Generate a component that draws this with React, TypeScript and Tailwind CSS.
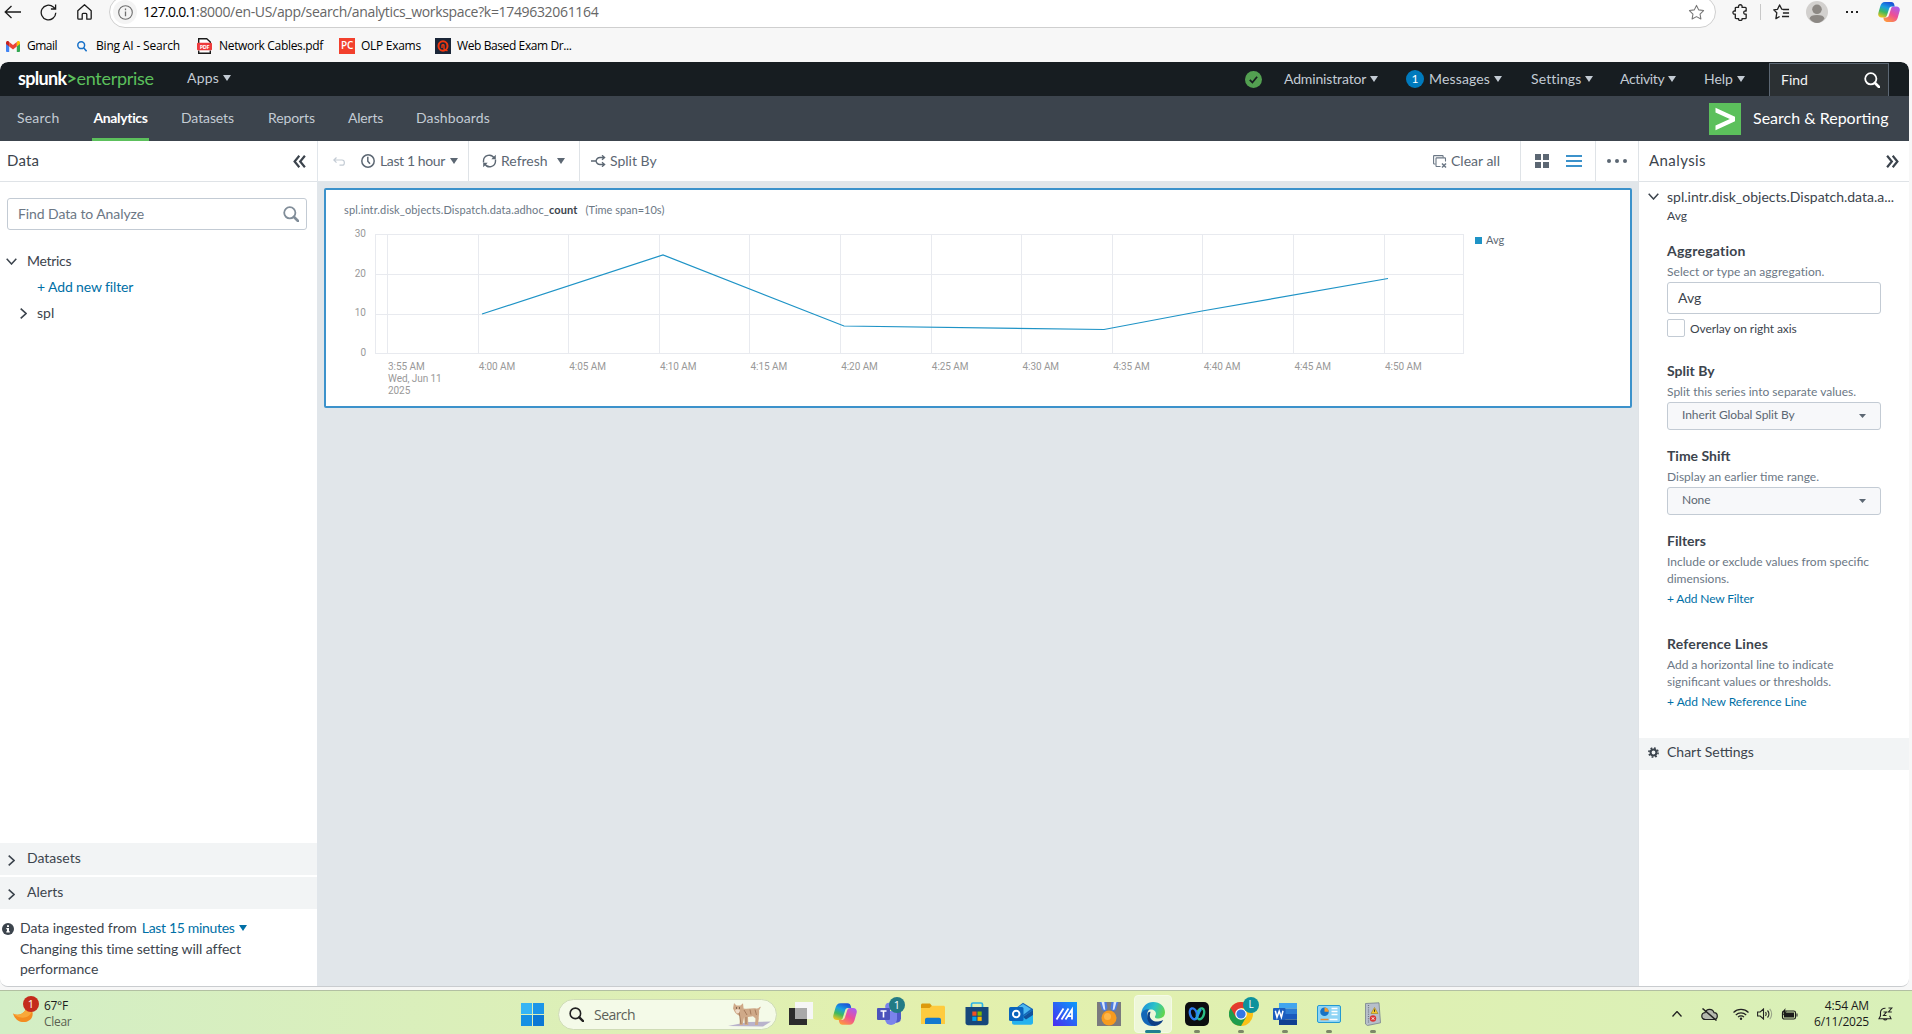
import type { ReactNode } from "react";

/* ---------- small shared pieces ---------- */

function Caret({ className = "" }: { className?: string }) {
  return (
    <svg viewBox="0 0 8 6" className={`h-1.5 w-2 shrink-0 ${className}`} fill="currentColor">
      <path d="M0 0h8L4 6z" />
    </svg>
  );
}

function Chevron({ dir, className = "" }: { dir: "down" | "right"; className?: string }) {
  return dir === "down" ? (
    <svg viewBox="0 0 11 7" className={`h-[7px] w-[11px] shrink-0 ${className}`} fill="none" stroke="#3c444d" strokeWidth="1.5">
      <path d="M.7.7 5.5 6 10.3.7" />
    </svg>
  ) : (
    <svg viewBox="0 0 7 11" className={`h-[11px] w-[7px] shrink-0 ${className}`} fill="none" stroke="#3c444d" strokeWidth="1.6">
      <path d="M.7.7 6 5.5.7 10.3" />
    </svg>
  );
}

function DoubleChevron({ flip = false }: { flip?: boolean }) {
  return (
    <svg viewBox="0 0 13 13" className={`h-[13px] w-[13px] shrink-0 ${flip ? "-scale-x-100" : ""}`} fill="none" stroke="#3c444d" strokeWidth="2.200">
      <path d="M6.3.8 1.6 6.5l4.7 5.7M11.9.8 7.2 6.5l4.7 5.7" />
    </svg>
  );
}

function Magnifier({ className = "", stroke = 2 }: { className?: string; stroke?: number }) {
  return (
    <svg viewBox="0 0 16 16" className={`shrink-0 ${className}`} fill="none" stroke="currentColor">
      <circle cx="6.8" cy="6.8" r="5.6" strokeWidth={stroke} />
      <path d="m11 11 4 4" strokeWidth={stroke + 0.8} strokeLinecap="round" />
    </svg>
  );
}

function CopilotLogo({ className = "" }: { className?: string }) {
  return (
    <svg viewBox="0 0 24 24" className={`shrink-0 ${className}`}>
      <defs>
        <linearGradient id="cpA" x1="0.6" y1="0" x2="0.2" y2="1">
          <stop offset="0" stopColor="#1b55d8" />
          <stop offset=".35" stopColor="#18a0e0" />
          <stop offset=".65" stopColor="#3fb95d" />
          <stop offset="1" stopColor="#f4c51d" />
        </linearGradient>
        <linearGradient id="cpB" x1="0.8" y1="0" x2="0.2" y2="1">
          <stop offset="0" stopColor="#a95cf0" />
          <stop offset=".5" stopColor="#ee4f95" />
          <stop offset="1" stopColor="#ff9a3d" />
        </linearGradient>
      </defs>
      <path fill="url(#cpB)" d="M17 6h3c3.200 0 4.300 2.500 3.600 5l-2 7c-.8 2.800-2.400 4.800-5.200 4.800H9.500c-2 0-2.800-1.200-3.300-2.800L5.800 18H9c1.500 0 2.400-.8 2.900-2.400l2.400-7.500C14.800 6.700 15.600 6 17 6z" />
      <path fill="url(#cpA)" d="M7 18H4C.8 18-.3 15.500.4 13l2-7C3.200 3.200 4.800 1.200 7.600 1.200h6.900c2 0 2.800 1.200 3.300 2.800l.4 2H15c-1.500 0-2.400.8-2.900 2.400l-2.400 7.500C9.200 17.300 8.400 18 7 18z" />
    </svg>
  );
}

/* ---------- browser chrome ---------- */

function Bookmark({ icon, label, className }: { icon: ReactNode; label: string; className: string }) {
  return (
    <div className={`flex shrink-0 items-center whitespace-nowrap ${className}`}>
      {icon}
      <span>{label}</span>
    </div>
  );
}

function BrowserChrome() {
  return (
    <header className="h-[62px] shrink-0 bg-[#f7f7f7] font-['Open_Sans',sans-serif] text-[#1b1b1b]">
      <div className="flex h-7 items-start">
        <div className="flex h-6 w-[109px] items-center pl-1">
          <svg viewBox="0 0 17 14" className="h-3.5 w-[17px]" fill="none" stroke="#1b1b1b" strokeWidth="1.3">
            <path d="M7.500 1 1.200 7l6.300 6M1.200 7H17" />
          </svg>
          <svg viewBox="0 0 17 17" className="ml-[19px] h-[17px] w-[17px]" fill="none" stroke="#1b1b1b" strokeWidth="1.3">
            <path d="M15.800 8.800a7.300 7.300 0 1 1-2.500-5.800L15.500 5M15.600.5V5h-4.700" />
          </svg>
          <svg viewBox="0 0 15 16" className="ml-5 h-4 w-[15px]" fill="none" stroke="#1b1b1b" strokeWidth="1.3" strokeLinejoin="round">
            <path d="M.8 6.800 7.500.8l6.700 6v7.400a1 1 0 0 1-1 1H9.800v-4.800c0-.6-.4-1-1-1H6.200c-.6 0-1 .4-1 1v4.800H1.800a1 1 0 0 1-1-1z" />
          </svg>
        </div>
        <div className="-mt-1 flex h-8 w-[1607px] items-center rounded-full border border-[#cfcfcf] bg-white pl-[3px]">
          <span className="flex h-6 w-6 shrink-0 items-center justify-center rounded-full bg-[#f4f4f4]">
            <svg viewBox="0 0 15 15" className="h-[15px] w-[15px]" fill="none" stroke="#6e6e6e" strokeWidth="1.1">
              <circle cx="7.500" cy="7.500" r="6.800" />
              <path d="M7.500 6.500v4.700M7.500 3.600v1.600" strokeWidth="1.3" />
            </svg>
          </span>
          <span className="ml-[6px] w-[1545px] shrink-0 whitespace-nowrap text-sm tracking-[-0.33px] text-[#666]">
            <span className="tracking-[-0.67px] text-black">127.0.0.1</span>
            :8000/en-US/app/search/analytics_workspace?k=1749632061164
          </span>
          <svg viewBox="0 0 24 24" className="h-[17px] w-[17px] shrink-0" fill="none" stroke="#767676" strokeWidth="1.500" strokeLinejoin="round">
            <path d="m12 2 3.100 6.300 6.900 1-5 4.900 1.200 6.900L12 17.800l-6.200 3.300L7 14.200 2 9.300l6.900-1z" />
          </svg>
        </div>
        <div className="flex h-6 items-center pl-4">
          <svg viewBox="0 0 18 18" className="h-[17px] w-[17px]" fill="none" stroke="#222" strokeWidth="1.400" strokeLinejoin="round">
            <path d="M4.500 3.500H7C6.600 1.700 7.500.8 8.800.8s2.200.9 1.800 2.700H14c.6 0 1 .4 1 1v3c-1.800-.4-2.600.4-2.600 1.600s.8 2 2.600 1.600v3.800c0 .6-.4 1-1 1h-3.400c.4 1.500-.6 2-1.800 2s-2.200-.5-1.800-2H4.500c-.6 0-1-.4-1-1v-3.800C1.800 11.100 1 10.300 1 9.100s.8-2 2.500-1.600v-3c0-.6.4-1 1-1z" />
          </svg>
          <span className="ml-[11px] h-4 w-px bg-[#c8c8c8]" />
          <svg viewBox="0 0 18 18" className="ml-3 h-[17px] w-[17px]" fill="none" stroke="#222" strokeWidth="1.400" strokeLinejoin="round">
            <path d="M12 5.800 9.300 5.500 7 1 4.800 5.600.8 6.200 4 9.300 3.100 15.500 7 13.200M10.500 5.800H17M10.500 9.500H17M9.500 13.200H17" />
          </svg>
          <svg viewBox="0 0 22 22" className="ml-4 h-[22px] w-[22px]">
            <circle cx="11" cy="11" r="11" fill="#d2d0ce" />
            <circle cx="11" cy="8.300" r="4.800" fill="#8c8884" />
            <path fill="#8c8884" d="M3.500 17.500C4 15 6.500 14 11 14s7 1 7.500 3.500C16.500 20.300 14 22 11 22s-5.500-1.700-7.500-4.500z" />
          </svg>
          <span className="ml-[18px] flex gap-[3px]">
            <i className="h-[2px] w-[2px] bg-[#222]" />
            <i className="h-[2px] w-[2px] bg-[#222]" />
            <i className="h-[2px] w-[2px] bg-[#222]" />
          </span>
          <CopilotLogo className="ml-5 h-[22px] w-[22px]" />
        </div>
      </div>
      <div className="flex h-[34px] items-center pl-1.5 pt-[2px] text-xs text-black">
        <Bookmark
          className="w-[71px] gap-[7px] tracking-[-0.500px]"
          label="Gmail"
          icon={
            <svg viewBox="0 0 14 11" className="h-[11px] w-3.5">
              <path fill="#4285f4" d="M0 2v8.200c0 .5.400.8.900.8h2.300V5z" />
              <path fill="#34a853" d="M10.800 5v6h2.300c.5 0 .9-.3.900-.8V2z" />
              <path fill="#fbbc04" d="M10.800 1v4.500L14 3V1.700C14 .2 12.300-.4 11.200.6z" />
              <path fill="#ea4335" d="M3.200 1v4.500L7 8.400l3.800-2.900V1L7 4z" />
              <path fill="#c5221f" d="M0 1.700V3l3.200 2.500V1l-.4-.4C1.700-.4 0 .2 0 1.700z" />
            </svg>
          }
        />
        <Bookmark
          className="w-[120px] gap-[9px] tracking-[-0.180px]"
          label="Bing AI - Search"
          icon={
            <svg viewBox="0 0 10 11" className="h-[11px] w-2.5" fill="none" stroke="#1771c9" strokeWidth="1.500">
              <circle cx="4.200" cy="4.200" r="3.400" />
              <path d="m6.600 6.800 3 3.500" />
            </svg>
          }
        />
        <Bookmark
          className="w-[142px] gap-[7px] tracking-[-0.320px]"
          label="Network Cables.pdf"
          icon={
            <svg viewBox="0 0 15 16" className="h-4 w-[15px]">
              <path d="M1.700 5V.7h8L13.300 4v1M1.700 12.500v2.800h11.600v-2.800" fill="#fff" stroke="#1b1b1b" strokeWidth="1.400" />
              <rect y="4.800" width="15" height="7.500" rx="1" fill="#ee3b3b" />
              <text x="7.500" y="10.700" fontSize="5.500" fontWeight="700" fill="#fff" textAnchor="middle" fontFamily="Open Sans">PDF</text>
            </svg>
          }
        />
        <Bookmark
          className="w-24 gap-[6px] tracking-[-0.280px]"
          label="OLP Exams"
          icon={<span className="flex h-4 w-4 items-center justify-center bg-[#f2402d] text-[10px] font-semibold tracking-[-0.300px] text-white">PC</span>}
        />
        <Bookmark
          className="gap-[6px] tracking-[-0.400px]"
          label="Web Based Exam Dr..."
          icon={
            <svg viewBox="0 0 16 16" className="h-4 w-4">
              <rect width="16" height="16" fill="#1b2638" />
              <ellipse cx="8" cy="8" rx="4.500" ry="4.800" fill="none" stroke="#f0370f" strokeWidth="2" />
              <path d="M7 10V7.500C7 6.500 9 6.500 9 7.500V11l3.500 1.800" stroke="#f0370f" strokeWidth="1.400" fill="none" />
            </svg>
          }
        />
      </div>
    </header>
  );
}

/* ---------- application bars ---------- */

function MenuItem({ label, className }: { label: string; className: string }) {
  return (
    <div className={`flex shrink-0 items-center gap-1 whitespace-nowrap ${className}`}>
      <span>{label}</span>
      <Caret />
    </div>
  );
}

function GlobalBar() {
  return (
    <div className="flex h-[34px] shrink-0 items-center rounded-t-lg bg-[#171d21] text-sm text-[#c3cbd4]">
      <div className="mb-[3px] w-[169px] shrink-0 whitespace-nowrap pl-[18px] text-lg">
        <span className="font-bold tracking-[-0.670px] text-white">splunk</span>
        <span className="inline-block w-[10px] text-center font-bold tracking-normal text-[#5cc05c]">&gt;</span>
        <span className="tracking-[-0.300px] text-[#5cc05c]">enterprise</span>
      </div>
      <MenuItem label="Apps" className="w-[1058px] pb-0.5 pl-[18px] tracking-[0.200px]" />
      <svg viewBox="0 0 17 17" className="ml-[18px] h-[17px] w-[17px] shrink-0">
        <circle cx="8.500" cy="8.500" r="8.500" fill="#53a051" />
        <path d="m4.800 8.800 2.600 2.700 4.700-5.700" fill="none" stroke="#171d21" strokeWidth="1.800" />
      </svg>
      <MenuItem label="Administrator" className="ml-[22px] w-[122px] pb-px tracking-[-0.150px]" />
      <span className="mr-[5px] flex h-[18px] w-[18px] shrink-0 items-center justify-center rounded-full bg-[#007abd] text-xs text-white">1</span>
      <MenuItem label="Messages" className="w-[102px] pb-px tracking-[0.150px]" />
      <MenuItem label="Settings" className="w-[89px] pb-px tracking-[0.120px]" />
      <MenuItem label="Activity" className="w-[84px] pb-px tracking-[-0.350px]" />
      <MenuItem label="Help" className="w-[65px] pb-px tracking-[-0.050px]" />
      <div className="mt-0.5 flex h-[34px] w-[120px] items-center justify-between border border-[#5c6773] bg-[#2b3033] pb-px pl-[11px] pr-2 text-[#f2f4f5]">
        <span>Find</span>
        <Magnifier className="h-4 w-4 text-white" stroke={1.800} />
      </div>
    </div>
  );
}

const tabs = [
  { label: "Datasets", cls: "w-[87px] tracking-[-0.100px]" },
  { label: "Reports", cls: "w-20 tracking-[-0.100px]" },
  { label: "Alerts", cls: "w-[68px] tracking-[-0.200px]" },
  { label: "Dashboards", cls: "tracking-[0.120px]" },
];

function AppBar() {
  return (
    <nav className="flex h-[45px] shrink-0 items-center whitespace-nowrap bg-[#3c444d] text-sm text-[#c3cbd4]">
      <span className="w-[76px] pb-px pl-[17px] tracking-[0.200px]">Search</span>
      <span className="ml-4 mr-8 flex h-[45px] w-[57px] items-center justify-center border-b-[3px] border-[#5cc05c] pt-0.5 font-bold tracking-[-0.350px] text-white">
        Analytics
      </span>
      {tabs.map((t) => (
        <span key={t.label} className={`pb-px ${t.cls}`}>
          {t.label}
        </span>
      ))}
      <div className="ml-auto flex items-center text-base text-white">
        <svg viewBox="0 0 32 32" className="mr-3 h-8 w-8">
          <rect width="32" height="32" fill="#5cc05c" />
          <path d="M6.500 4.800 26 13.800v4.400L6.500 27.200v-4.600L20.800 16 6.500 9.400z" fill="#fff" />
        </svg>
        <span className="w-[156px] pb-px">Search &amp; Reporting</span>
      </div>
    </nav>
  );
}

/* ---------- left panel ---------- */

function CollapsedSection({ label }: { label: string }) {
  return (
    <div className="flex h-8 items-center bg-[#f2f4f5] pl-[8px]">
      <Chevron dir="right" className="mt-0.5" />
      <span className="ml-3 pb-0.5">{label}</span>
    </div>
  );
}

function DataPanel() {
  return (
    <aside className="flex w-[318px] shrink-0 flex-col overflow-hidden rounded-bl-lg border-r border-[#e1e6eb] bg-white text-sm text-[#3c444d]">
      <div className="flex h-[41px] shrink-0 items-center justify-between border-b border-[#dfe3e7] pl-[7px] pr-[11px]">
        <span className="text-[15px] tracking-[0.200px]">Data</span>
        <DoubleChevron />
      </div>
      <div className="mx-[7px] mt-4 flex h-8 w-[300px] shrink-0 items-center justify-between rounded-[3px] border border-[#c3cbd4] pl-[10px] pr-[7px] text-[#6b7785]">
        <span className="pb-px tracking-[-0.090px]">Find Data to Analyze</span>
        <Magnifier className="h-4 w-4 text-[#818d99]" stroke={1.800} />
      </div>
      <div className="mt-[18px] flex h-[26px] items-center pl-[6px]">
        <Chevron dir="down" />
        <span className="ml-[10px] tracking-[-0.300px]">Metrics</span>
      </div>
      <div className="flex h-[26px] items-center pl-[37px] tracking-[-0.130px] text-[#006fa6]">+ Add new filter</div>
      <div className="flex h-[26px] items-center pl-5">
        <Chevron dir="right" />
        <span className="ml-[10px]">spl</span>
      </div>
      <div className="mt-auto flex flex-col gap-0.5">
        <CollapsedSection label="Datasets" />
        <CollapsedSection label="Alerts" />
      </div>
      <div className="flex h-[77px] shrink-0 pl-[2px] pt-[9px] leading-[20.500px]">
        <svg viewBox="0 0 12 12" className="mr-[6px] mt-[5px] h-3 w-3 shrink-0">
          <circle cx="6" cy="6" r="6" fill="#3c444d" />
          <path d="M5 2.300h2v1.700H5zM4.300 5H7v3.200h.8v1.200H4.300V8.200H5V6.200h-.7z" fill="#fff" />
        </svg>
        <div className="whitespace-nowrap">
          <div className="flex items-center">
            <span className="tracking-[-0.050px]">Data ingested from</span>
            <span className="ml-[5px] tracking-[-0.320px] text-[#006fa6]">Last 15 minutes</span>
            <Caret className="ml-1 text-[#006fa6]" />
          </div>
          <div className="tracking-[-0.060px]">Changing this time setting will affect</div>
          <div>performance</div>
        </div>
      </div>
    </aside>
  );
}

/* ---------- workspace ---------- */

function Toolbar() {
  return (
    <div className="flex h-[40px] shrink-0 items-stretch whitespace-nowrap bg-white text-sm text-[#5c6773]">
      <div className="flex w-[151px] items-center border-r border-[#dfe3e7] pl-[15px]">
        <svg viewBox="0 0 12 9" className="h-[9px] w-3" fill="none" stroke="#c3cbd4" strokeWidth="1.200">
          <path d="M3.500.5.800 3l2.700 2.700M.8 3H9c1.500 0 2.300 1 2.300 2.300v.6c0 1.400-.8 2.300-2.300 2.300H6.500" />
        </svg>
        <svg viewBox="0 0 14 14" className="ml-4 h-3.5 w-3.5" fill="none" stroke="#5c6773" strokeWidth="1.500">
          <circle cx="7" cy="7" r="6.200" />
          <path d="M6.800 2.800V7.300L9 9.800" />
        </svg>
        <span className="ml-[5px] pb-px tracking-[-0.380px]">Last 1 hour</span>
        <Caret className="ml-[5px]" />
      </div>
      <div className="flex w-[111px] items-center border-r border-[#dfe3e7] pl-[13px]">
        <svg viewBox="0 0 15 14" className="h-3.5 w-[15px]" fill="none" stroke="#5c6773" strokeWidth="1.400">
          <path d="M1.500 8.500V7a5.700 5.700 0 0 1 10.800-2.600M13.500 5.500V7A5.700 5.700 0 0 1 2.700 9.600" />
          <path d="M13.800.8v4.500H9.300zM1.200 13.200V8.700h4.500z" fill="#5c6773" stroke="none" />
        </svg>
        <span className="ml-[4px] pb-px">Refresh</span>
        <Caret className="ml-[9px]" />
      </div>
      <div className="flex items-center pl-[11px]">
        <svg viewBox="0 0 15 12" className="h-3 w-[15px]" fill="none" stroke="#5c6773" strokeWidth="1.300">
          <path d="M0 6h5M13.500 2.500H9C6.500 2.500 5.500 4 5 6c.5 2 1.500 3.500 4 3.500h4.500M11 .3l2.600 2.200L11 4.700M11 7.300l2.600 2.200L11 11.700" />
        </svg>
        <span className="ml-1 pb-px">Split By</span>
      </div>
      <div className="ml-auto flex w-[88px] items-center border-r border-[#dfe3e7]">
        <svg viewBox="0 0 14 13" className="h-[13px] w-3.5" fill="none" stroke="#6b7785" strokeWidth="1.100">
          <path d="M2.500 9H1.200A.7.700 0 0 1 .6 8.400V1.200c0-.4.200-.6.600-.6h8.200c.4 0 .7.200.7.600v1.300" />
          <path d="M7.500 11.500H3.700a.7.700 0 0 1-.7-.7V3.600c0-.4.300-.7.700-.7h8.100c.4 0 .7.300.7.700v3" />
          <path d="m9 8.500 4 4m0-4-4 4" strokeWidth="1.500" />
        </svg>
        <span className="ml-[4px] pb-px">Clear all</span>
      </div>
      <div className="flex w-[75px] items-center border-r border-[#dfe3e7] pl-3.5">
        <span className="grid grid-cols-2 gap-x-[2px] gap-y-[2px]">
          <i className="h-[6px] w-[6px] bg-[#5c6773]" />
          <i className="h-[6px] w-[6px] bg-[#5c6773]" />
          <i className="h-[6px] w-[6px] bg-[#5c6773]" />
          <i className="h-[6px] w-[6px] bg-[#5c6773]" />
        </span>
        <span className="ml-[17px] flex w-4 flex-col gap-[3px]">
          <i className="h-0.5 bg-[#3c92cb]" />
          <i className="h-0.5 bg-[#3c92cb]" />
          <i className="h-0.5 bg-[#3c92cb]" />
        </span>
      </div>
      <div className="flex w-[42px] items-center justify-center gap-0.5">
        <i className="h-1 w-1 rounded-full bg-[#5c6773]" />
        <i className="mx-0.5 h-1 w-1 rounded-full bg-[#5c6773]" />
        <i className="h-1 w-1 rounded-full bg-[#5c6773]" />
      </div>
    </div>
  );
}

const ticks = ["3:55", "4:00", "4:05", "4:10", "4:15", "4:20", "4:25", "4:30", "4:35", "4:40", "4:45", "4:50"];
const vertical = [12.5, 103.5, 193.500, 284.500, 374.500, 465.500, 556.500, 646.500, 737.500, 827.500, 918.500, 1009.500];

function ChartCard() {
  return (
    <section className="mx-1.5 mt-[7px] h-[220px] rounded-[2px] border-2 border-[#3c92cb] bg-white pl-[18px] pt-[13px]">
      <h2 className="flex h-[15px] items-center whitespace-nowrap text-[11px] text-[#6b7785]">
        <span className="tracking-[0.130px]">spl.intr.disk_objects.Dispatch.data.adhoc_</span>
        <b className="tracking-[0.110px] text-[#3c444d]">count</b>
        <span className="ml-2">(Time span=10s)</span>
      </h2>
      <div className="mt-[9px] flex">
        <div className="flex w-[22px] flex-col text-right font-['Roboto',sans-serif] text-[10px] leading-[14px] text-[#999]">
          <span className="h-[39.500px]">30</span>
          <span className="h-[39.500px]">20</span>
          <span className="h-[39.500px]">10</span>
          <span>0</span>
        </div>
        <div className="ml-[9px] w-[1091px] pt-[7px]">
          <svg viewBox="0 0 1090 121" className="h-[121px] w-[1090px]" fill="none">
            <g stroke="#e8eaef" strokeWidth="1">
              {[0.5, 40.500, 80.500, 119.500].map((y) => (
                <path key={y} d={`M0 ${y}H1089`} />
              ))}
              <path d="M.5 0v120M1088.500 0v120" />
              {vertical.map((x) => (
                <path key={x} d={`M${x} 0v120`} />
              ))}
            </g>
            <path d="M107 80 288 21 469 92 729 95.500 827 77 1013 44.500" stroke="#1e93c6" strokeWidth="1.200" />
          </svg>
          <div className="mt-[6px] flex pl-[13px] font-['Roboto',sans-serif] text-[10px] leading-3 tracking-[-0.070px] text-[#999]">
            {ticks.map((t, i) => (
              <div key={t} className="w-[90.650px] shrink-0 whitespace-nowrap">
                {t} AM
                {i === 0 && (
                  <>
                    <div>Wed, Jun 11</div>
                    <div>2025</div>
                  </>
                )}
              </div>
            ))}
          </div>
        </div>
        <div className="ml-[9px] mt-[7px] flex h-3 items-center gap-[4px] text-[11px] text-[#5c6773]">
          <i className="h-[7px] w-[7px] bg-[#1e93c6]" />
          Avg
        </div>
      </div>
    </section>
  );
}

/* ---------- right panel ---------- */

function SelectBox({ value }: { value: string }) {
  return (
    <div className="mt-[2px] flex h-7 w-[214px] items-center justify-between rounded-[3px] border border-[#c3cbd4] bg-[#f7f8fa] pl-3.5 pr-[14px] text-[12px] text-[#5c6773]">
      <span className="mb-0.5 tracking-[-0.080px]">{value}</span>
      <svg viewBox="0 0 7 4" className="h-1 w-[7px]" fill="currentColor">
        <path d="M0 0h7L3.500 4z" />
      </svg>
    </div>
  );
}

function Heading({ children }: { children: ReactNode }) {
  return <h3 className="flex h-6 items-center text-sm font-bold text-[#3c444d]">{children}</h3>;
}

function Hint({ children }: { children: ReactNode }) {
  return <p className="whitespace-nowrap text-xs leading-[17px] text-[#6b7785]">{children}</p>;
}

function AnalysisPanel() {
  return (
    <aside className="flex w-[271px] shrink-0 flex-col overflow-hidden rounded-br-lg border-l border-[#dfe3e7] bg-white text-sm text-[#3c444d]">
      <div className="flex h-[41px] shrink-0 items-center justify-between border-b border-[#dfe3e7] pl-[10px] pr-[10px]">
        <span className="text-[15px] tracking-[0.420px]">Analysis</span>
        <DoubleChevron flip />
      </div>
      <div className="flex h-[26px] items-center pl-[9px] pt-[3px]">
        <Chevron dir="down" />
        <span className="ml-2 whitespace-nowrap">spl.intr.disk_objects.Dispatch.data.a...</span>
      </div>
      <div className="pl-7">
        <div className="h-[31px] text-xs leading-4">Avg</div>
        <Heading>
          <span className="tracking-[0.240px]">Aggregation</span>
        </Heading>
        <Hint>
          <span className="tracking-[0.050px]">Select or type an aggregation.</span>
        </Hint>
        <div className="mt-[2px] flex h-8 w-[214px] items-center rounded-[3px] border border-[#c3cbd4] pb-px pl-[10px]">Avg</div>
        <div className="mt-[5px] flex items-center gap-[5px] text-xs">
          <i className="h-[18px] w-[18px] rounded-[2px] border border-[#c3cbd4]" />
          <span className="pt-0.5 tracking-[-0.060px]">Overlay on right axis</span>
        </div>
        <div className="mt-[22px]">
          <Heading>Split By</Heading>
          <Hint>Split this series into separate values.</Hint>
          <SelectBox value="Inherit Global Split By" />
        </div>
        <div className="mt-[14px]">
          <Heading>Time Shift</Heading>
          <Hint>Display an earlier time range.</Hint>
          <SelectBox value="None" />
        </div>
        <div className="mt-[14px]">
          <Heading>Filters</Heading>
          <Hint>
            Include or exclude values from specific
            <br />
            dimensions.
          </Hint>
          <div className="mt-1 h-4 text-xs tracking-[-0.140px] text-[#006fa6]">+ Add New Filter</div>
        </div>
        <div className="mt-[25px]">
          <Heading>
            <span className="tracking-[0.170px]">Reference Lines</span>
          </Heading>
          <Hint>
            Add a horizontal line to indicate
            <br />
            significant values or thresholds.
          </Hint>
          <div className="mt-1 h-4 text-xs text-[#006fa6]">+ Add New Reference Line</div>
        </div>
      </div>
      <div className="mt-[28px] flex h-8 shrink-0 items-center bg-[#f2f4f5] pb-1 pl-[9px]">
        <svg viewBox="0 0 11 11" className="h-[11px] w-[11px]" fill="none" stroke="#3c444d">
          <circle cx="5.500" cy="5.500" r="2.900" strokeWidth="2" />
          <circle cx="5.500" cy="5.500" r="4.600" strokeWidth="1.600" strokeDasharray="1.800 1.810" />
        </svg>
        <span className="ml-2">Chart Settings</span>
      </div>
    </aside>
  );
}

/* ---------- taskbar ---------- */

function Slot({ children, running = false }: { children: ReactNode; running?: boolean }) {
  return (
    <div className="relative flex h-full w-11 shrink-0 items-center justify-center pt-[3px]">
      {children}
      {running && <i className="absolute bottom-px h-[3px] w-1.5 rounded-full bg-[#7d8768]" />}
    </div>
  );
}

const icon = "h-6 w-6";

function TaskIcons() {
  return (
    <>
      <Slot>
        <svg viewBox="0 0 24 24" className={icon}>
          <rect x="0" y="6" width="18" height="17" fill="#2c2c2c" />
          <rect x="6" y="0" width="18" height="17" fill="#f6f6f6" />
          <rect x="6" y="6" width="12" height="11" fill="#a9a9a9" />
        </svg>
      </Slot>
      <Slot>
        <CopilotLogo className={icon} />
      </Slot>
      <Slot>
        <svg viewBox="0 0 24 24" className={icon}>
          <circle cx="12" cy="4.500" r="3.800" fill="#7b83eb" />
          <path d="M16 9h8v7.500a4.500 4.500 0 0 1-6 4z" fill="#5059c9" />
          <path d="M8 9h12v8a6 6 0 0 1-12 0z" fill="#7b83eb" />
          <rect x="0" y="6" width="13" height="12" rx="1" fill="#4b53bc" />
          <path d="M3.500 9h6M6.500 9v6.500" stroke="#fff" strokeWidth="1.600" />
        </svg>
        <span className="absolute right-[6px] top-1.5 flex h-4 w-4 items-center justify-center rounded-full bg-[#237b85] text-[11px] text-white">1</span>
      </Slot>
      <Slot>
        <svg viewBox="0 0 24 24" className={icon}>
          <path d="M0 3c0-1 .6-1.600 1.600-1.600H9L11 4v4H0z" fill="#dc9a0c" />
          <path d="M0 6h8.500L11 3.800h11.500c.9 0 1.500.6 1.500 1.500V22H0z" fill="#fecb3e" />
          <path d="M4 22v-4.200c0-1.300.8-2 2-2h12c1.200 0 2 .7 2 2V22z" fill="#1379cf" />
        </svg>
      </Slot>
      <Slot>
        <svg viewBox="0 0 24 24" className={icon}>
          <path d="M6.500 5V2.500C6.500 1.500 7 1 8 1h8c1 0 1.500.500 1.500 1.500V5" fill="none" stroke="#2bb3e8" strokeWidth="1.700" />
          <path d="M.5 5h23v15.500c0 1.700-1 2.700-2.700 2.700H3.200C1.500 23.200.5 22.200.5 20.500z" fill="#17477b" />
          <path fill="#f25022" d="M7.300 9.500h4.200v4.200H7.300z" />
          <path fill="#7fba00" d="M12.500 9.500h4.200v4.200h-4.200z" />
          <path fill="#00a4ef" d="M7.300 14.700h4.200v4.200H7.300z" />
          <path fill="#ffb900" d="M12.500 14.700h4.200v4.200h-4.200z" />
        </svg>
      </Slot>
      <Slot>
        <svg viewBox="0 0 24 24" className={icon}>
          <path d="M3 9 14 .8 24 7v10H3z" fill="#1565b8" />
          <path d="M6 7 14 2l8 5-8 6z" fill="#4bb8f0" />
          <path d="M3 10.500 12 16l12-8v12.500c0 1.400-.8 2.200-2.200 2.200H5.200C3.800 22.700 3 22 3 20.500z" fill="#25b2ee" />
          <path d="m14 15 10-7v5l-7 4.500z" fill="#12529c" />
          <rect x="0" y="5" width="14.500" height="14" rx="1.500" fill="#0a64bd" />
          <circle cx="7.200" cy="12" r="3.300" fill="none" stroke="#fff" strokeWidth="1.900" />
        </svg>
      </Slot>
      <Slot>
        <svg viewBox="0 0 24 24" className={icon}>
          <defs>
            <linearGradient id="asus" x1="0" y1="1" x2="1" y2="0">
              <stop offset="0" stopColor="#4a2cf0" />
              <stop offset="1" stopColor="#0a9bfa" />
            </linearGradient>
          </defs>
          <rect width="24" height="24" fill="url(#asus)" />
          <path d="m3.500 17.500 7-11M8.500 17.500l7-11M12.500 17.500l6.500-10v10M14.500 14.200H19" stroke="#fff" strokeWidth="1.800" fill="none" />
        </svg>
      </Slot>
      <Slot>
        <svg viewBox="0 0 24 24" className={icon}>
          <rect width="24" height="24" fill="#7a7a7e" />
          <path d="M2.500 0h7l1 6-2 3.500L5 8z" fill="#4c7be0" />
          <path d="M21.500 0h-7l-1 6 2 3.500L19 8z" fill="#4c7be0" />
          <path d="M4.500 0h2.800l1 8-1.700-.5zM19.500 0h-2.800l-1 8 1.700-.5z" fill="#dbe5fa" />
          <circle cx="12" cy="16" r="7.500" fill="#f79a1e" />
          <circle cx="10.500" cy="14.500" r="3.500" fill="#ffb648" />
        </svg>
      </Slot>
      <Slot>
        <span className="absolute inset-x-[3px] bottom-px top-1 rounded-[4px] border border-[#f4fae6] bg-[#eef7d9]" />
        <svg viewBox="0 0 24 24" className={`${icon} relative`}>
          <defs>
            <linearGradient id="edgeTop" x1="0" y1="0.300" x2="1" y2="0.600">
              <stop offset="0" stopColor="#1c8fdc" />
              <stop offset=".5" stopColor="#2cc3c8" />
              <stop offset="1" stopColor="#62d64b" />
            </linearGradient>
          </defs>
          <path d="M.3 11C1.200 4.500 6 0 12.200 0 19 0 24 4.600 24 10.200c0 4-2.800 6.300-6.300 6.300-2.800 0-4.300-.9-3.600-2.200 2.300-3.500-.4-6.800-4-6.800C6 7.500 1.500 9 .3 11z" fill="url(#edgeTop)" />
          <path d="M.1 13C-.3 9 4.500 7 8.800 7.300 6.600 9 6 11 6.300 13.500c.5 4.500 3.700 8.500 8.700 9.800C7 26 .6 20.500.1 13z" fill="#1467b8" />
          <path d="M8.800 13c-.3 4.500 4.500 7.500 9.500 6.300 1.500-.4 3-1 3.900-1.400C20.500 21.500 17.500 23.800 13.500 24 8.300 22.700 5.800 18 6.300 13.500 6.500 11 7.500 9.500 9.500 9.800z" fill="#0e3f86" />
        </svg>
        <i className="absolute bottom-px h-[3px] w-4 rounded-full bg-[#1f7f90]" />
      </Slot>
      <Slot running>
        <svg viewBox="0 0 24 24" className={icon}>
          <rect width="24" height="24" rx="5" fill="#0b0d10" />
          <ellipse cx="15.500" cy="11.800" rx="3.400" ry="5.600" transform="rotate(18 15.500 11.800)" fill="none" stroke="#2bbf86" strokeWidth="2.400" />
          <ellipse cx="8.500" cy="11.800" rx="3.400" ry="5.600" transform="rotate(-18 8.500 11.800)" fill="none" stroke="#2d7df0" strokeWidth="2.400" />
          <path d="M10.500 17c2.500-1.500 3-8 5.500-9.800" fill="none" stroke="#2a9fe0" strokeWidth="2.400" />
        </svg>
      </Slot>
      <Slot running>
        <svg viewBox="0 0 24 24" className={icon}>
          <circle cx="12" cy="12" r="12" fill="#fbc116" />
          <path d="M1.600 6A12 12 0 0 0 12 24l5.200-9L12 12z" fill="#1f9d4d" />
          <path d="M12 6H22.400A12 12 0 0 0 1.600 6l5.200 9z" fill="#e33b2e" />
          <circle cx="12" cy="12" r="5.800" fill="#fff" />
          <circle cx="12" cy="12" r="4.600" fill="#3577e5" />
        </svg>
        <span className="absolute right-1 top-1.5 flex h-4 w-4 items-center justify-center rounded-full bg-[#0d929c] text-[10px] text-white">L</span>
      </Slot>
      <Slot running>
        <svg viewBox="0 0 24 24" className={icon}>
          <path d="M6 1h18v5.500H6z" fill="#41a5ee" />
          <path d="M6 6.500h18V12H6z" fill="#2b7cd3" />
          <path d="M6 12h18v5.500H6z" fill="#185abd" />
          <path d="M6 17.500h18V23H6z" fill="#103f91" />
          <rect y="6" width="12.500" height="12" rx="1" fill="#1a5dbe" />
          <path d="m2.300 8.800 1.700 6.500 2.200-6 2.200 6L10 8.800" fill="none" stroke="#fff" strokeWidth="1.500" />
        </svg>
      </Slot>
      <Slot running>
        <svg viewBox="0 0 24 24" className={icon}>
          <rect x=".5" y="3.500" width="23" height="17" rx="1.500" fill="#8ed4f5" stroke="#2399d2" />
          <circle cx="7.500" cy="9.800" r="4.300" fill="#1772c4" />
          <path d="M7.500 9.800V5.500a4.300 4.300 0 0 1 4.300 4.300z" fill="#f49a2c" />
          <path d="M14.500 6.500h6M14.500 9.500h6M14.500 12.500h6" stroke="#fff" strokeWidth="1.400" />
          <path d="M3.500 17.500h8" stroke="#f08c2e" strokeWidth="1.500" />
          <path d="M12.500 17.500h8" stroke="#fff" strokeWidth="1.500" />
        </svg>
      </Slot>
      <Slot running>
        <svg viewBox="0 0 24 24" className={icon}>
          <path d="M4.500 1.500 18 .8l1.500 20-13 2.700-2-1.500z" fill="#b7bfca" stroke="#75808e" strokeWidth=".8" />
          <path d="M7.500 3v18" stroke="#6c7684" strokeWidth="1.200" strokeDasharray="1 1.200" />
          <path d="m13.500 5.500 3.500 6h-7z" fill="#f5c62c" stroke="#8a7415" strokeWidth=".5" />
          <path d="M13.500 7.500v2.300" stroke="#333" />
          <circle cx="12" cy="16.500" r="3.200" fill="#d93434" />
          <path d="m10.800 15.300 2.400 2.400m0-2.400-2.400 2.400" stroke="#fff" />
        </svg>
      </Slot>
    </>
  );
}

function Lynx() {
  return (
    <svg viewBox="0 0 44 24" className="h-6 w-11 shrink-0">
      <path d="M0 23 20 19l23-.5-8 5z" fill="#b9b3cc" />
      <path d="M6 0l2.500 2.500h4L15 .3l.6 5.200c4 .8 9-.6 12.500 0C31 6 30.500 4 33 3.800l-2 3.700c.6 3-.6 5-.2 8l-1 6.500h-2.800l.5-6.500-2.500-2.200-5 .6.3 8.100h-3.500l-.7-8-1.500 8h-3l.3-9C10 12 7.500 10.500 6.500 8.500L5 5.500z" fill="#cfa988" />
      <path d="m11 9 2 12M16 7l3 5M22 6.500l1 5M27 6.500l1.500 5.500M18 14v7" stroke="#94684a" strokeWidth=".7" fill="none" />
      <path d="M7 7c1.500-1 3.500-1 5 0l-1 3-2.500.2z" fill="#eedbc8" />
      <path d="M8 5h1M11 5h1" stroke="#3a281c" />
    </svg>
  );
}

function Taskbar() {
  return (
    <footer className="flex h-[44px] shrink-0 items-stretch border-t border-[#b2c0a2] bg-linear-to-r from-[#d3eec5] via-[#e3f0ad] to-[#d9f0b9] font-['Open_Sans',sans-serif] text-xs text-[#1b1b1b]">
      <div className="relative flex w-[521px] shrink-0 pl-[13px] pt-[7px]">
        <svg viewBox="0 0 24 24" className="mt-[3px] h-[22px] w-[22px]">
          <path d="M0 13.500c4 2.500 9 1.500 12-1.500 2-2 3-4.500 3-7 4 1.500 6.500 5 6.500 9 0 5-4 9-10 9C6 23 1.800 19.500 0 13.500z" fill="#f38c20" />
          <path d="M0 13.500c4 2.500 9 1.500 12-1.500 2-2 3-4.500 3-7 3 1.200 5 3 6 5.500C18 19 8 21 0 13.500z" fill="#f9a83a" />
        </svg>
        <span className="absolute left-[23px] top-[5px] flex h-4 w-4 items-center justify-center rounded-full bg-[#c42b1c] text-[11px] text-white">1</span>
        <div className="ml-[9px] leading-4">
          <div className="tracking-[-0.300px]">67°F</div>
          <div className="tracking-[-0.300px] text-[#5a6152]">Clear</div>
        </div>
      </div>
      <div className="mt-[3px] grid h-[23px] w-[23px] shrink-0 grid-cols-2 gap-px self-center">
        <i className="bg-[#35b5f5]" />
        <i className="bg-[#1b96e8]" />
        <i className="bg-[#1590e4]" />
        <i className="bg-[#0a78d4]" />
      </div>
      <div className="ml-3.5 mt-2 flex h-[31px] w-[219px] shrink-0 items-center rounded-full border border-[#cfdcb6] bg-[#f4fae8] pl-[10px] text-sm text-[#5c5f58]">
        <Magnifier className="h-[15px] w-[15px] text-[#222]" stroke={1.700} />
        <span className="ml-[10px] tracking-[-0.550px]">Search</span>
        <span className="ml-auto mr-1">
          <Lynx />
        </span>
      </div>
      <div className="ml-[2px] flex">
        <TaskIcons />
      </div>
      <div className="ml-auto flex items-center pr-[19px] pt-[3px]">
        <svg viewBox="0 0 10 6" className="h-1.5 w-[10px]" fill="none" stroke="#222" strokeWidth="1.300">
          <path d="m.5 5.500 4.500-5 4.500 5" />
        </svg>
        <svg viewBox="0 0 17 13" className="ml-[19px] h-[13px] w-[17px]" stroke="#222" strokeWidth="1.200">
          <path d="M4.500 11.500C2 11.500.8 10 .8 8S2.300 4.800 4 4.600C4.700 2.500 6.500 1.300 8.500 1.300s4 1.300 4.500 3.400c2 .1 3.300 1.500 3.300 3.400s-1.300 3.400-3.300 3.400z" fill="#b5b9ae" />
          <path d="m1.500.5 14 12" strokeWidth="1.500" />
        </svg>
        <svg viewBox="0 0 16 12" className="ml-[15px] h-3 w-4" fill="none" stroke="#222" strokeWidth="1.200">
          <path d="M.5 4.500a10.600 10.600 0 0 1 15 0M2.800 7a7.400 7.400 0 0 1 10.400 0M5 9.200a4.200 4.200 0 0 1 6 0" />
          <circle cx="8" cy="10.800" r="1.200" fill="#222" stroke="none" />
        </svg>
        <svg viewBox="0 0 16 12" className="ml-[8px] h-3 w-4" fill="none" stroke="#222" strokeWidth="1.100">
          <path d="M.6 4v4h2.600L6.500 11V1L3.200 4zM8.500 4.200a3 3 0 0 1 0 3.600M10.500 2.500a5 5 0 0 1 0 7" />
          <path d="M12.700.8a8 8 0 0 1 0 10.400" stroke="#9aa58a" />
        </svg>
        <svg viewBox="0 0 17 12" className="ml-[8px] h-3 w-[17px]">
          <rect x="1.500" y="3" width="13" height="8" rx="1.800" fill="none" stroke="#1b1b1b" strokeWidth="1.200" />
          <rect x="3" y="4.500" width="10" height="5" fill="#1b1b1b" />
          <path d="M15.500 5.500h1v3h-1z" fill="#1b1b1b" />
          <path d="M4.500 0 1 4.500h2L1.500 8 6 3.500H4z" fill="#1b1b1b" />
        </svg>
        <div className="ml-4 w-[55px] whitespace-nowrap text-right leading-4">
          <div className="tracking-[-0.150px]">4:54 AM</div>
          <div className="tracking-[-0.200px]">6/11/2025</div>
        </div>
        <svg viewBox="0 0 15 15" className="ml-[9px] h-[15px] w-[15px]" fill="none" stroke="#222" strokeWidth="1.100">
          <path d="M7.500 1.200C4.500 1 2.500 3 2.500 5.500v3.300L1 11.700h12l-1.400-2.900M5.500 12a2 2 0 0 0 3.500 0" />
          <path d="M5.500 5h3L5.500 8.500h3M10.500 1h3.300l-3.300 4h3.300" />
        </svg>
      </div>
    </footer>
  );
}

/* ---------- page ---------- */

export default function App() {
  return (
    <div className="flex h-[1034px] w-[1912px] flex-col overflow-hidden bg-[#f7f7f7]">
      <BrowserChrome />
      <main className="mr-[3px] flex h-[925px] shrink-0 flex-col overflow-hidden rounded-lg border-b border-[#c9cccf] font-['Lato',sans-serif]">
        <GlobalBar />
        <AppBar />
        <div className="flex min-h-0 grow">
          <DataPanel />
          <div className="flex min-w-0 grow flex-col bg-[#e1e6ea]">
            <Toolbar />
            <ChartCard />
          </div>
          <AnalysisPanel />
        </div>
      </main>
      <div className="h-[3px] shrink-0" />
      <Taskbar />
    </div>
  );
}
